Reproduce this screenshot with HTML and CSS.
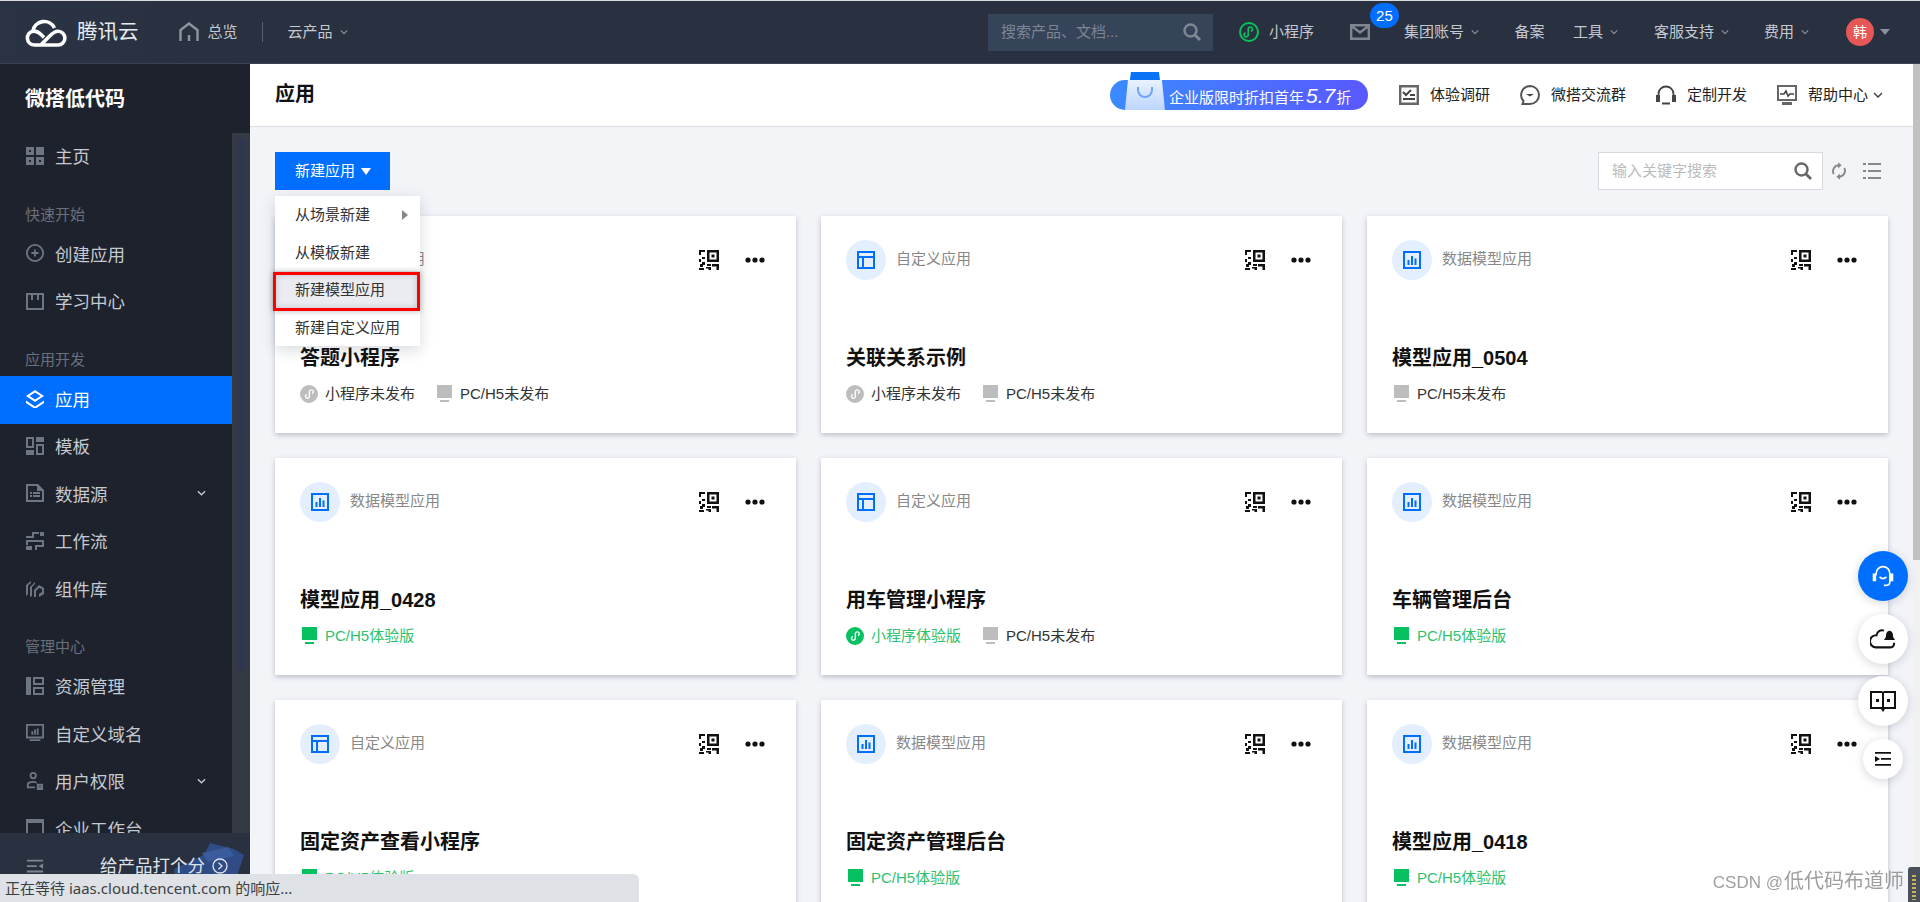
FILE: index.html
```html
<!DOCTYPE html>
<html lang="zh-CN">
<head>
<meta charset="utf-8">
<title>微搭低代码 - 应用</title>
<link rel="stylesheet" href="styles.css">
</head>
<body>
<svg class="sprite" xmlns="http://www.w3.org/2000/svg">
  <symbol id="i-mini" viewBox="0 0 20 20"><path fill="currentColor" fill-rule="evenodd" d="M10 0a10 10 0 1 1 0 20a10 10 0 0 1 0-20zM12.600 4.600c-1.700 0-3 1.300-3 2.900v5c0 .9-.7 1.500-1.400 1.500c-.8 0-1.400-.6-1.400-1.400c0-.6.4-1.100.9-1.300l-.4-1.400c-1.200.3-2 1.400-2 2.700c0 1.600 1.300 2.900 2.900 2.900s3-1.300 3-2.900v-5c0-.9.600-1.500 1.400-1.500s1.400.6 1.400 1.400c0 .6-.4 1.100-.9 1.300l.4 1.400c1.200-.3 2-1.400 2-2.700c0-1.600-1.300-2.900-2.900-2.900z"/></symbol>
  <symbol id="i-mini-line" viewBox="0 0 20 20"><circle cx="10" cy="10" r="9" fill="none" stroke="currentColor" stroke-width="2"/><path fill="none" stroke="currentColor" stroke-width="1.600" d="M6.500 10.800a2.100 2.100 0 1 0 2.700 2V7.200a2.100 2.100 0 1 1 2.700 2"/></symbol>
  <symbol id="i-pc" viewBox="0 0 18 18"><path fill="currentColor" d="M2 0h15v13H2zM5 15h9v2H5z"/></symbol>
  <symbol id="i-chart" viewBox="0 0 18 18"><path fill="#006eff" fill-rule="evenodd" d="M0 0h18v18H0zM2 2v14h14V2zM4.500 9h2v5h-2zM8 5h2v9H8zM11.500 7.500h2V14h-2z"/></symbol>
  <symbol id="i-layout" viewBox="0 0 18 18"><path fill="#006eff" fill-rule="evenodd" d="M0 0h18v18H0zM2 2v3h14V2zM2 7v9h3V7zM7 7v9h9V7z"/></symbol>
  <symbol id="i-qr" viewBox="0 0 20 20"><path fill="#111" fill-rule="evenodd" d="M8 0h12v12H8zM10.500 2.500v7h7v-7zM12.500 4.500h3v3h-3zM0 0h6v2H2v3H0zM3 7h3v2H3zM0 9h2v3H0zM3 12h3v3h-2v2H1v-3h2zM8 14h4v2H8zM13 14h7v6h-2.500v-3.500H13zM7 17h5v3H9.500v-1.500H7zM0 18h5v2H0z"/></symbol>
  <symbol id="i-more" viewBox="0 0 20 6"><circle cx="3" cy="3" r="2.600" fill="#111"/><circle cx="10" cy="3" r="2.600" fill="#111"/><circle cx="17" cy="3" r="2.600" fill="#111"/></symbol>
  <symbol id="i-search" viewBox="0 0 18 18"><circle cx="7.500" cy="7.500" r="6" fill="none" stroke="currentColor" stroke-width="2.400"/><path d="M12 12l5 5" stroke="currentColor" stroke-width="2.800"/></symbol>
  <symbol id="i-chev" viewBox="0 0 10 6"><path d="M1 1l4 4l4-4" fill="none" stroke="currentColor" stroke-width="1.500"/></symbol>
</svg>

<div class="app">
  <header class="topbar">
    <svg class="logo" viewBox="0 0 42 30"><path fill="none" stroke="#fff" stroke-width="3.600" d="M9 28a7 7 0 0 1-1.200-13.800A11.500 11.500 0 0 1 29.500 11M9 14.100c3 0 5 1.400 7 3.400l3 3M9 28h24a6.900 6.900 0 0 0 0-13.800c-3.500 0-5.500 2-8.500 5l-8 8"/></svg>
    <span class="brand">腾讯云</span>
    <svg class="home" viewBox="0 0 20 20"><path fill="none" stroke="#8e96a3" stroke-width="2.400" d="M1.500 19V8L10 1.500L18.500 8v11M10 13v6"/></svg>
    <a class="top-link overview">总览</a>
    <i class="divider"></i>
    <a class="top-link products">云产品<svg class="chev"><use href="#i-chev"/></svg></a>
    <div class="top-right">
      <div class="top-search"><span>搜索产品、文档...</span><svg class="ico18"><use href="#i-search"/></svg></div>
      <a class="top-link mini"><svg class="ico20 green"><use href="#i-mini-line"/></svg>小程序</a>
      <a class="mail"><svg viewBox="0 0 20 16" class="mail-ico"><path fill="none" stroke="#7d8590" stroke-width="2.400" d="M1.200 1.200h17.600v13.600H1.200zM1.500 2L10 8.500L18.500 2"/></svg><b class="badge">25</b></a>
      <a class="top-link group">集团账号<svg class="chev"><use href="#i-chev"/></svg></a>
      <a class="top-link beian">备案</a>
      <a class="top-link tools">工具<svg class="chev"><use href="#i-chev"/></svg></a>
      <a class="top-link service">客服支持<svg class="chev"><use href="#i-chev"/></svg></a>
      <a class="top-link">费用<svg class="chev"><use href="#i-chev"/></svg></a>
      <span class="avatar">韩</span><i class="caret"></i>
    </div>
  </header>

  <div class="body">
    <aside class="sidebar">
      <h2 class="side-title">微搭低代码</h2>
      <div class="side-scroll">
        <nav class="side-nav">
          <a class="nav-item"><svg viewBox="0 0 18 18"><path fill-rule="evenodd" d="M0 0h8v8H0zM10 0h8v8h-8zM0 10h8v8H0zM10 10h8v8h-8zM3 3v2h2V3zM13 13v2h2v-2zM3 13v2h2v-2z"/></svg>主页</a>
          <div class="nav-label">快速开始</div>
          <a class="nav-item"><svg viewBox="0 0 20 20"><path fill="none" stroke="#6e7682" stroke-width="2" d="M10 1a9 9 0 1 1 0 18a9 9 0 0 1 0-18z"/><path d="M9 6h2v3h3v2h-3v3H9v-3H6V9h3z"/></svg>创建应用</a>
          <a class="nav-item"><svg viewBox="0 0 18 18"><path fill-rule="evenodd" d="M0 1h18v17H0zM2 3v13h14V3zM5 3h2v5H5zM11 3h2v5h-2z"/></svg>学习中心</a>
          <div class="nav-label">应用开发</div>
          <a class="nav-item active"><svg viewBox="0 0 18 18"><path fill="#fff" fill-rule="evenodd" d="M9 0l9 6l-9 6l-9-6zM9 2.500L3.500 6L9 9.500L14.500 6zM0 10.500L9 16.500l9-6v2.500L9 19L0 13z"/></svg>应用</a>
          <a class="nav-item"><svg viewBox="0 0 18 18"><path fill-rule="evenodd" d="M0 0h8v11H0zM2 2v7h4V2zM10 0h8v5h-8zM0 13h8v5H0zM10 7h8v11h-8zM12 9v7h4V9z"/></svg>模板</a>
          <a class="nav-item"><svg viewBox="0 0 18 18"><path fill-rule="evenodd" d="M0 0h12l6 6v12H0zM2 2v14h14V7h-5V2zM4 8h2v2H4zM7 8h7v2H7zM4 11h2v2H4zM7 11h7v2H7z"/></svg>数据源<svg class="nav-chev"><use href="#i-chev"/></svg></a>
          <a class="nav-item"><svg viewBox="0 0 18 18"><path d="M6 0h7v2H8v4H0V4h6zM14 0h4v4h-4zM7 8h11v7h-7v3H9v-5h7v-3H7zM0 8h7v2H2v3H0zM0 14h6v4H0z"/></svg>工作流</a>
          <a class="nav-item"><svg viewBox="0 0 18 18"><path d="M0 6l5-4v2L2 6.500V15l-2 2zM4 8l5-5v2L6 8v9l-2 1zM8 11l5-5l5 3v6l-5 3v-3l3-2v-3l-3-1l-3 3v6H8z"/></svg>组件库</a>
          <div class="nav-label">管理中心</div>
          <a class="nav-item"><svg viewBox="0 0 18 18"><path fill-rule="evenodd" d="M0 0h5v18H0zM7 0h11v8H7zM9 2v4h7V2zM7 10h11v8H7zM9 12v4h7v-4z"/></svg>资源管理</a>
          <a class="nav-item"><svg viewBox="0 0 20 20"><path fill-rule="evenodd" d="M0 0h20v16H0zM2 2v12h16V2zM6 8h2v4H6zM9 6h2v6H9zM12 5h2v7h-2zM4 17h12v2H4z"/></svg>自定义域名</a>
          <a class="nav-item"><svg viewBox="0 0 18 20"><path fill-rule="evenodd" d="M7 0a4 4 0 1 1 0 8a4 4 0 0 1 0-8zM7 2a2 2 0 1 0 0 4a2 2 0 0 0 0-4zM0 13q1-3 7-3q3 0 4 1v2q-1-1-4-1q-4 0-5 2v2h7v2H0zM11 13h7v7h-7zM14 15v2h1v-2z"/></svg>用户权限<svg class="nav-chev"><use href="#i-chev"/></svg></a>
          <a class="nav-item"><svg viewBox="0 0 18 18"><path fill-rule="evenodd" d="M0 0h18v18H0zM2 4v12h14V4z"/></svg>企业工作台</a>
        </nav>
        <div class="side-track"><div class="side-thumb"></div></div>
      </div>
      <div class="side-foot">
        <svg class="foot-ico" viewBox="0 0 20 20"><path fill="#7d8590" d="M1 2h18v2H1zM1 8h11v2H1zM1 14h18v2H1zM19 6v6l-5-3z"/></svg>
        <svg class="foot-art" viewBox="0 0 76 50"><path fill="#2f4c86" d="M4 26l30-14l6-12l24 6l10 6l-10 30L28 50H8z"/><path fill="#3a5b9c" d="M32 10l26-6l6 9l-26 6z"/></svg>
        <span class="foot-text">给产品打个分</span>
        <svg class="foot-go" viewBox="0 0 16 16"><circle cx="8" cy="8" r="7" fill="none" stroke="#dfe3ea" stroke-width="1.300"/><path d="M6.500 4.800L10 8l-3.500 3.200" fill="none" stroke="#dfe3ea" stroke-width="1.300"/></svg>
      </div>
    </aside>

    <main class="main">
      <div class="page">
        <div class="page-head">
          <h1>应用</h1>
          <div class="promo">
            <span class="bag"><svg viewBox="0 0 20 14"><path d="M3 1v3a7 7 0 0 0 14 0V1" fill="none" stroke="#6ea6f5" stroke-width="2"/></svg></span>
            企业版限时折扣首年<em>5.7</em>折
          </div>
          <a class="head-link"><svg viewBox="0 0 20 20"><path fill="none" stroke="#666" stroke-width="2.400" d="M1.200 1.200h17.600v17.600H1.200z"/><path fill="none" stroke="#444" stroke-width="2" d="M4 7l3 3l5-5M4 14h12M11 10h5"/></svg>体验调研</a>
          <a class="head-link"><svg viewBox="0 0 20 20"><path fill="none" stroke="#555" stroke-width="2" d="M10 1a9 9 0 0 1 0 18H2.500l1-3A9 9 0 0 1 10 1z"/><path d="M6 9h8l-4 2.500z" fill="#444"/></svg>微搭交流群</a>
          <a class="head-link"><svg viewBox="0 0 20 20"><path fill="none" stroke="#444" stroke-width="1.800" d="M2.500 11V9a7.500 7.500 0 0 1 15 0v2M6 18.500h8"/><path fill="#444" d="M0 10h4v7H0zM16 10h4v7h-4z"/></svg>定制开发</a>
          <a class="head-link help"><svg viewBox="0 0 20 20"><path fill-rule="evenodd" fill="#666" d="M0 0h20v16H0zM2 2v12h16V2z"/><path fill="none" stroke="#444" stroke-width="1.600" d="M3 9h4l2-3l2 5l2-2h4"/><path fill="#666" d="M5 17h10v3H5z"/></svg>帮助中心<svg class="chev dark"><use href="#i-chev"/></svg></a>
        </div>

        <div class="content">
          <div class="toolbar">
            <button class="new-btn" type="button"><span>新建应用</span><i class="btn-caret"></i></button>
            <ul class="menu">
              <li>从场景新建<i class="menu-arrow"></i></li>
              <li>从模板新建</li>
              <li class="marked">新建模型应用</li>
              <li>新建自定义应用</li>
            </ul>
            <div class="tool-right">
              <div class="key-search"><span>输入关键字搜索</span><svg class="ico18"><use href="#i-search"/></svg></div>
              <svg class="tool-ico" viewBox="0 0 16 20"><path fill="none" stroke="#888" stroke-width="2.200" d="M2 13.500A6.800 6.800 0 0 1 8 3.500M14 6.500A6.800 6.800 0 0 1 8 16.500"/><path fill="#888" d="M7 0v7l4-3.500zM9 13v7l-4-3.500z"/></svg>
              <svg class="tool-ico list" viewBox="0 0 18 16"><path fill="#888" d="M0 0h3v2H0zM5 0h13v2H5zM0 7h3v2H0zM5 7h13v2H5zM0 14h3v2H0zM5 14h13v2H5z"/></svg>
            </div>
          </div>

          <div class="grid">
            <article class="card">
              <div class="card-top"><span class="type-ico"><svg><use href="#i-layout"/></svg></span><span class="type">自定义应用</span><svg class="qr"><use href="#i-qr"/></svg><svg class="more"><use href="#i-more"/></svg></div>
              <h3>答题小程序</h3>
              <div class="status"><span><svg class="grey"><use href="#i-mini"/></svg>小程序未发布</span><span><svg class="grey"><use href="#i-pc"/></svg>PC/H5未发布</span></div>
            </article>
            <article class="card">
              <div class="card-top"><span class="type-ico"><svg><use href="#i-layout"/></svg></span><span class="type">自定义应用</span><svg class="qr"><use href="#i-qr"/></svg><svg class="more"><use href="#i-more"/></svg></div>
              <h3>关联关系示例</h3>
              <div class="status"><span><svg class="grey"><use href="#i-mini"/></svg>小程序未发布</span><span><svg class="grey"><use href="#i-pc"/></svg>PC/H5未发布</span></div>
            </article>
            <article class="card">
              <div class="card-top"><span class="type-ico"><svg><use href="#i-chart"/></svg></span><span class="type">数据模型应用</span><svg class="qr"><use href="#i-qr"/></svg><svg class="more"><use href="#i-more"/></svg></div>
              <h3>模型应用_0504</h3>
              <div class="status"><span><svg class="grey"><use href="#i-pc"/></svg>PC/H5未发布</span></div>
            </article>
            <article class="card">
              <div class="card-top"><span class="type-ico"><svg><use href="#i-chart"/></svg></span><span class="type">数据模型应用</span><svg class="qr"><use href="#i-qr"/></svg><svg class="more"><use href="#i-more"/></svg></div>
              <h3>模型应用_0428</h3>
              <div class="status"><span class="ok"><svg><use href="#i-pc"/></svg>PC/H5体验版</span></div>
            </article>
            <article class="card">
              <div class="card-top"><span class="type-ico"><svg><use href="#i-layout"/></svg></span><span class="type">自定义应用</span><svg class="qr"><use href="#i-qr"/></svg><svg class="more"><use href="#i-more"/></svg></div>
              <h3>用车管理小程序</h3>
              <div class="status"><span class="ok"><svg><use href="#i-mini"/></svg>小程序体验版</span><span><svg class="grey"><use href="#i-pc"/></svg>PC/H5未发布</span></div>
            </article>
            <article class="card">
              <div class="card-top"><span class="type-ico"><svg><use href="#i-chart"/></svg></span><span class="type">数据模型应用</span><svg class="qr"><use href="#i-qr"/></svg><svg class="more"><use href="#i-more"/></svg></div>
              <h3>车辆管理后台</h3>
              <div class="status"><span class="ok"><svg><use href="#i-pc"/></svg>PC/H5体验版</span></div>
            </article>
            <article class="card">
              <div class="card-top"><span class="type-ico"><svg><use href="#i-layout"/></svg></span><span class="type">自定义应用</span><svg class="qr"><use href="#i-qr"/></svg><svg class="more"><use href="#i-more"/></svg></div>
              <h3>固定资产查看小程序</h3>
              <div class="status"><span class="ok"><svg><use href="#i-pc"/></svg>PC/H5体验版</span></div>
            </article>
            <article class="card">
              <div class="card-top"><span class="type-ico"><svg><use href="#i-chart"/></svg></span><span class="type">数据模型应用</span><svg class="qr"><use href="#i-qr"/></svg><svg class="more"><use href="#i-more"/></svg></div>
              <h3>固定资产管理后台</h3>
              <div class="status"><span class="ok"><svg><use href="#i-pc"/></svg>PC/H5体验版</span></div>
            </article>
            <article class="card">
              <div class="card-top"><span class="type-ico"><svg><use href="#i-chart"/></svg></span><span class="type">数据模型应用</span><svg class="qr"><use href="#i-qr"/></svg><svg class="more"><use href="#i-more"/></svg></div>
              <h3>模型应用_0418</h3>
              <div class="status"><span class="ok"><svg><use href="#i-pc"/></svg>PC/H5体验版</span></div>
            </article>
          </div>
        </div>
      </div>
      <div class="page-track"><div class="page-thumb"></div></div>
    </main>
  </div>
</div>

<div class="fabs">
  <a class="fab primary"><svg viewBox="0 0 28 28"><path fill="none" stroke="#fff" stroke-width="2" d="M6 13V11a8 8 0 0 1 16 0v2v8q0 4-5 4h-2M10 15q4 4 8 0"/><path fill="#fff" d="M2 11h4v9H2zM22 11h4v9h-4z"/></svg></a>
  <a class="fab"><svg viewBox="0 0 28 24"><path fill="none" stroke="#111" stroke-width="2.200" d="M15 3a6 6 0 0 0-8 5a6 6 0 0 0-1 13h16q4 0 4-5"/><path fill="#111" d="M17 10q0-7 4-7t4 7l2 3H15z"/></svg></a>
  <a class="fab"><svg viewBox="0 0 26 22"><path fill-rule="evenodd" fill="#111" d="M0 1h12l1 1l1-1h12v18H15l-2 3l-2-3H0zM2 3v14h10V3zM14 3v14h10V3zM6 9h3v3H6zM17 9h3v3h-3z"/></svg></a>
  <a class="fab small"><svg viewBox="0 0 16 14"><path fill="#111" d="M0 0h16v1.800H0zM6 6h10v1.800H6zM0 12h16v1.800H0zM0 4l5 3l-5 3z"/></svg></a>
</div>

<div class="status-bar">正在等待 iaas.cloud.tencent.com 的响应...</div>
<div class="watermark"><span class="wm-latin">CSDN @</span>低代码布道师</div>
<div class="tray"><i></i></div>
</body>
</html>
```
FILE: styles.css
```css
* { box-sizing: border-box; }
html, body { margin: 0; height: 100%; overflow: hidden; }
body {
  font-family: "Liberation Sans", "Noto Sans CJK SC", sans-serif;
  font-size: 15px;
  color: #333;
  background: #f2f4f8;
}
a { color: inherit; text-decoration: none; }
svg { display: block; flex: none; }
h1, h2, h3, ul { margin: 0; padding: 0; }
.sprite { display: none; }
.app { display: flex; flex-direction: column; height: 902px; }

/* top bar */
.topbar {
  flex: none;
  height: 64px;
  display: flex;
  align-items: center;
  padding: 0 30px 0 25px;
  background: linear-gradient(90deg, #2a3344 0, #29303f 320px);
  border-top: 1px solid #d9dbe0;
  border-bottom: 1px solid #3a4352;
  color: #c5c9d0;
  line-height: 20px;
  white-space: nowrap;
}
.logo { width: 42px; height: 30px; }
.brand { margin-left: 10px; font-size: 20.500px; color: #e9ebee; }
.home { width: 20px; height: 20px; margin-left: 40px; }
.top-link { display: flex; align-items: center; }
.overview { margin-left: 9px; }
.divider { width: 1px; height: 20px; background: #566070; margin-left: 24px; }
.products { margin-left: 25px; }
.chev { width: 8px; height: 6px; margin-left: 7px; color: #8a919c; }
.chev.dark { color: #444; margin-left: -6px; width: 10px; }
.top-right { margin-left: auto; display: flex; align-items: center; gap: 36px; }
.top-search {
  width: 225px;
  height: 37px;
  background: #36445a;
  display: flex;
  align-items: center;
  justify-content: space-between;
  padding: 0 12px 0 13px;
  color: #7c8694;
}
.top-search .ico18 { color: #808894; }
.ico18 { width: 18px; height: 18px; }
.ico20 { width: 20px; height: 20px; margin-right: 10px; }
.green { color: #07c160; }
.mini { margin-left: -10px; }
.mail { position: relative; display: block; margin-left: 0; margin-right: -1px; }
.mail-ico { width: 20px; height: 16px; }
.group { margin-right: -0.500px; margin-left: -1px; }
.beian { margin-right: -1.500px; }
.service { margin-right: -1px; }
.badge {
  position: absolute;
  left: 20px;
  top: -21px;
  width: 29px;
  height: 25px;
  border-radius: 13px;
  background: #006eff;
  color: #fff;
  font-weight: 400;
  font-size: 15px;
  line-height: 25px;
  text-align: center;
}
.tools { margin-left: -6px; }
.avatar {
  width: 28px;
  height: 28px;
  margin-left: 1px;
  border-radius: 50%;
  background: #e85757;
  color: #fff;
  font-size: 14px;
  line-height: 28px;
  text-align: center;
}
.caret {
  margin-left: -30px;
  width: 0;
  height: 0;
  border: 5px solid transparent;
  border-top: 6px solid #8a919c;
  border-bottom: 0;
}

/* sidebar */
.body { flex: 1; min-height: 0; display: flex; }
.sidebar {
  flex: none;
  width: 250px;
  display: flex;
  flex-direction: column;
  background: #1e222d;
}
.side-title {
  flex: none;
  height: 69px;
  padding-left: 25px;
  font-size: 20px;
  line-height: 71px;
  font-weight: 700;
  color: #fff;
}
.side-scroll { flex: 1; min-height: 0; display: flex; overflow: hidden; }
.side-nav { width: 232px; flex: none; }
.side-track { flex: 1; background: #343944; padding: 6px 5px 0; }
.side-thumb { height: 531px; background: #2d3850; }
.nav-item {
  height: 47.500px;
  display: flex;
  align-items: center;
  gap: 11px;
  padding: 0 0 2px 26px;
  font-size: 17.500px;
  color: #c5c9d0;
}
.nav-item > svg:first-child { width: 18px; height: 18px; fill: #6e7682; }
.nav-item.active { height: 48px; margin-bottom: -0.500px; background: #006eff; color: #fff; }
.nav-chev { width: 9px; height: 6px; margin-left: auto; margin-right: 26px; color: #c5c9d0; }
.nav-label {
  height: 50px;
  padding: 24px 0 0 25px;
  font-size: 15px;
  line-height: 20px;
  color: #6a707b;
}
.side-foot {
  position: relative;
  flex: none;
  height: 69px;
  background: #29303f;
  color: #dfe3ea;
  display: flex;
  align-items: center;
  padding: 0 0 0 26px;
  overflow: hidden;
}
.foot-ico { width: 18px; height: 18px; margin-top: -2px; }
.foot-art { position: absolute; left: 170px; top: 10px; width: 76px; height: 50px; }
.foot-text { position: relative; margin-left: 56px; font-size: 17.500px; line-height: 24px; margin-top: -4px; white-space: nowrap; }
.foot-go { position: relative; width: 16px; height: 16px; margin-left: 7px; margin-top: -4px; }

/* main */
.main { flex: 1; min-width: 0; display: flex; }
.page { flex: 1; min-width: 0; display: flex; flex-direction: column; }
.page-track { flex: none; width: 7px; background: #f1f1f1; }
.page-thumb { height: 496px; background: #c1c1c1; }
.page-head {
  flex: none;
  height: 63px;
  background: #fff;
  border-bottom: 1px solid #dcdfe4;
  display: flex;
  align-items: center;
  padding: 0 30px 0 25px;
  line-height: 20px;
  white-space: nowrap;
}
.page-head h1 { font-size: 20px; line-height: 28px; font-weight: 700; color: #111; margin-right: auto; margin-top: -2px; }
.promo {
  position: relative;
  width: 258px;
  height: 30px;
  border-radius: 15px;
  background: linear-gradient(90deg, #3a8bff, #5a58ff);
  color: #fff;
  line-height: 32px;
  padding-left: 59px;
  margin-right: 31px;
}
.promo em { font-size: 21px; font-weight: 400; font-style: italic; margin: 0 1px 0 2px; }
.bag {
  position: absolute;
  left: 15px;
  top: 0;
  width: 40px;
  height: 30px;
  background: linear-gradient(180deg, #e8f1ff, #bcd6ff);
  clip-path: polygon(3px 0, 37px 0, 40px 100%, 0 100%);
}
.promo::before {
  content: "";
  position: absolute;
  left: 20px;
  top: -8px;
  width: 30px;
  height: 8px;
  background: #0a72f5;
  clip-path: polygon(1px 0, 29px 0, 100% 100%, 0 100%);
}
.bag svg { width: 20px; height: 14px; margin: 6px auto 0; }
.head-link { display: flex; align-items: center; gap: 11px; margin-right: 30px; color: #222; }
.head-link svg:first-child { width: 20px; height: 20px; }
.help { margin-right: 0; }

/* content */
.content { flex: 1; min-height: 0; padding: 25px 25px 0; overflow: hidden; background: #f2f4f8; }
.toolbar { position: relative; z-index: 2; height: 38px; display: flex; align-items: center; justify-content: space-between; }
.new-btn {
  width: 115px;
  height: 38px;
  border: 0;
  padding: 0 0 0 1px;
  background: #006eff;
  color: #fff;
  font: inherit;
  display: flex;
  align-items: center;
  justify-content: center;
}
.new-btn span { margin-top: -3px; }
.btn-caret {
  margin-left: 6px;
  width: 0;
  height: 0;
  border: 5px solid transparent;
  border-top: 7px solid #fff;
  border-bottom: 0;
}
.menu {
  position: absolute;
  left: 0;
  top: 44px;
  width: 145px;
  background: #fff;
  list-style: none;
  box-shadow: 0 4px 14px rgba(40, 50, 70, .18);
}
.menu li {
  position: relative;
  height: 37.500px;
  line-height: 37.500px;
  padding-left: 20px;
  color: #333;
}
.marked { background: #eaecf1; }
.marked::after {
  content: "";
  position: absolute;
  inset: 1px 0 -2px -2px;
  border: 3.500px solid #f00;
  box-shadow: 0 0 6px rgba(0, 0, 0, .3), inset 0 0 6px rgba(0, 0, 0, .18);
}
.menu-arrow {
  position: absolute;
  right: 12px;
  top: 14px;
  width: 0;
  height: 0;
  border: 5px solid transparent;
  border-left: 6px solid #888;
  border-right: 0;
}
.tool-right { display: flex; align-items: center; }
.key-search {
  width: 225px;
  height: 38px;
  background: #fff;
  border: 1px solid #d6d9e0;
  display: flex;
  align-items: center;
  justify-content: space-between;
  padding: 0 10px 0 13px;
  color: #bbb;
}
.key-search span { margin-top: -3px; }
.key-search .ico18 { color: #666; }
.tool-ico { width: 14px; height: 18px; margin-left: 9px; }
.tool-ico.list { width: 18px; height: 16px; margin-left: 17px; margin-right: 7px; }

.grid {
  margin-top: 26px;
  display: grid;
  grid-template-columns: repeat(3, 1fr);
  grid-auto-rows: 217px;
  gap: 25px;
}
.card {
  background: #fff;
  box-shadow: 0 2px 5px rgba(60, 70, 90, .3);
  padding: 24px 31px 0 25px;
  display: flex;
  flex-direction: column;
}
.card-top { display: flex; align-items: center; height: 40px; }
.type-ico {
  width: 40px;
  height: 40px;
  border-radius: 50%;
  background: #e3efff;
  display: flex;
  align-items: center;
  justify-content: center;
}
.type-ico svg { width: 18px; height: 18px; }
.type { margin-left: 10px; margin-right: auto; color: #888; line-height: 20px; margin-top: -2px; }
.qr { width: 20px; height: 20px; margin-right: 1px; }
.more { width: 20px; height: 6px; margin-left: 25px; }
.card h3 { margin-top: 64px; font-size: 20px; line-height: 28px; font-weight: 700; color: #111; }
.status { margin-top: 12px; display: flex; gap: 20px; line-height: 20px; }
.status span { display: flex; align-items: center; gap: 7px; color: #333; }
.status svg { width: 18px; height: 18px; color: #07c160; }
.status svg.grey { color: #bdbdbd; }
.status .ok { color: #2ec26f; }

/* floating */
.fabs {
  position: fixed;
  left: 1858px;
  top: 551px;
  width: 50px;
  display: flex;
  flex-direction: column;
  align-items: center;
  gap: 12.500px;
}
.fab {
  width: 50px;
  height: 50px;
  border-radius: 50%;
  background: #fff;
  box-shadow: 0 2px 10px rgba(60, 70, 90, .22);
  display: flex;
  align-items: center;
  justify-content: center;
}
.fab svg { width: 26px; height: 24px; }
.fab.primary { background: #006eff; }
.fab.small { width: 40px; height: 40px; }
.fab.small svg { width: 16px; height: 14px; }
.status-bar {
  position: fixed;
  left: 0;
  bottom: 0;
  width: 639px;
  height: 28px;
  padding-left: 5px;
  background: #dee1e6;
  border-top-right-radius: 6px;
  font-family: "Noto Sans", "Noto Sans CJK SC", sans-serif;
  font-size: 15px;
  line-height: 29px;
  color: #3c4043;
  white-space: nowrap;
}
.watermark {
  position: fixed;
  right: 16px;
  bottom: 7px;
  font-size: 20px;
  line-height: 24px;
  color: rgba(120, 120, 120, .72);
  white-space: nowrap;
}
.wm-latin { font-size: 17px; margin-right: 1px; }
.tray {
  position: fixed;
  right: 0;
  bottom: 0;
  width: 12px;
  height: 35px;
  background: #4a505a;
  border-radius: 3px 0 0 0;
  padding: 8px 4px 2px;
}
.tray i { display: block; height: 100%; background: repeating-linear-gradient(180deg, #c9b458 0 2px, #4a505a 2px 4px); }
```
